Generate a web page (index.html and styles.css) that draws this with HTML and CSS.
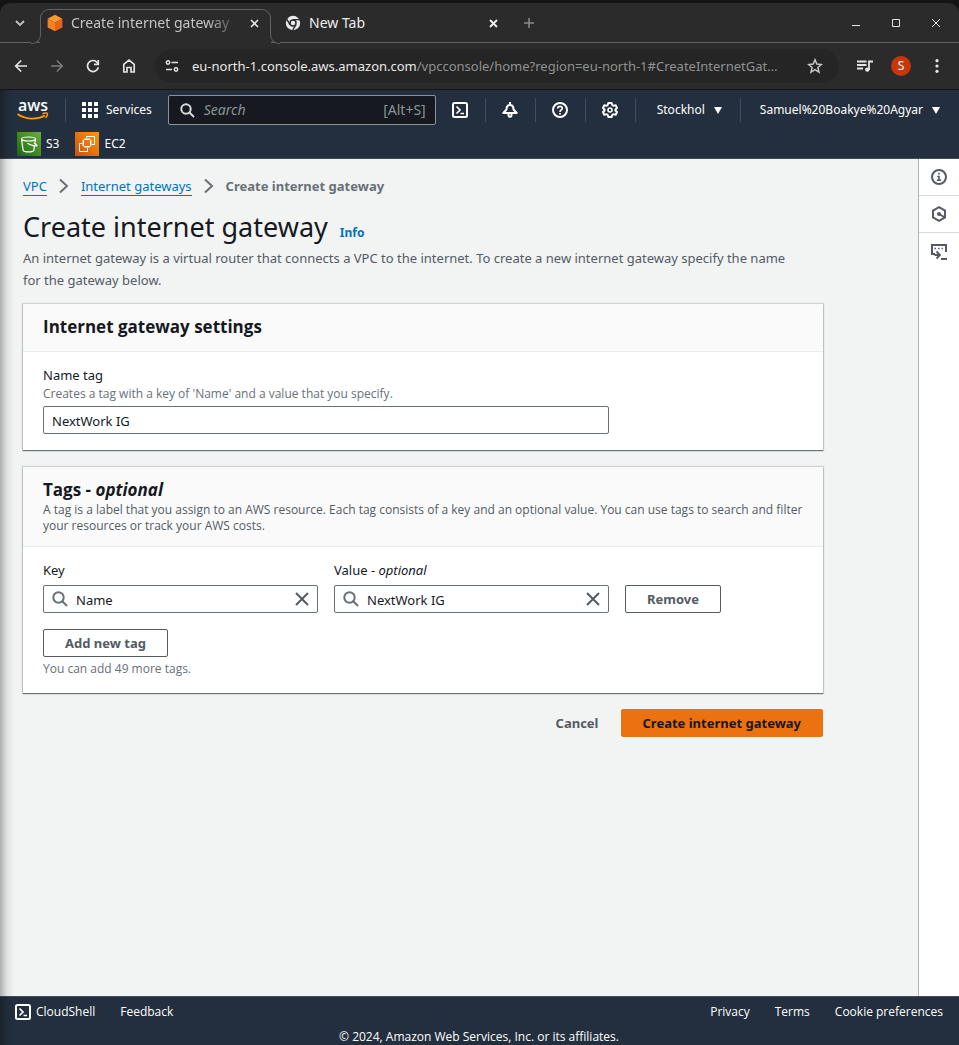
FILE: index.html
```html
<!DOCTYPE html>
<html lang="en">
<head>
<meta charset="utf-8">
<meta name="viewport" content="width=device-width, initial-scale=1">
<title>Create internet gateway</title>
<link rel="stylesheet" href="styles.css">
</head>
<body>
<div class="browser">
  <div class="tabstrip">
    <button class="tab-list" aria-label="Search tabs"><svg width="10" height="6" viewBox="0 0 10 6" fill="none" stroke="currentColor" stroke-width="1.8"><path d="M1 1l4 4 4-4"/></svg></button>
    <div class="tab tab-current">
      <svg width="16" height="18" viewBox="0 0 16 18"><path fill="#fb9a2c" d="M8 .8l7.400 4L8 8.800.6 4.800z"/><path fill="#f58220" d="M.6 4.800L8 8.800v8.400L.6 13.400z"/><path fill="#e8601c" d="M15.400 4.800L8 8.800v8.400l7.400-3.800z"/></svg>
      <span class="tab-title fade">Create internet gateway</span>
      <button class="tab-close" aria-label="Close tab"><svg width="9" height="9" viewBox="0 0 9 9" stroke="currentColor" stroke-width="1.600"><path d="M1 1l7 7M8 1L1 8"/></svg></button>
    </div>
    <div class="tab">
      <svg width="16" height="16" viewBox="0 0 16 16"><circle cx="8" cy="8" r="7.200" fill="#e8eaed"/><circle cx="8" cy="8" r="3" fill="none" stroke="#2b2b2b" stroke-width="1.500"/><path d="M8 4.600h7M5.100 9.800L1.600 3.900M10.900 9.700L7.500 15.500" stroke="#2b2b2b" stroke-width="1.400"/></svg>
      <span class="tab-title bright">New Tab</span>
      <button class="tab-close bright" aria-label="Close tab"><svg width="9" height="9" viewBox="0 0 9 9" stroke="currentColor" stroke-width="1.900"><path d="M1 1l7 7M8 1L1 8"/></svg></button>
    </div>
    <button class="new-tab" aria-label="New tab"><svg width="10" height="10" viewBox="0 0 10 10" stroke="currentColor" stroke-width="1.500"><path d="M5 0v10M0 5h10"/></svg></button>
    <div class="window-controls">
      <button aria-label="Minimize"><svg width="10" height="10" viewBox="0 0 10 10" stroke="currentColor"><path d="M1 7.500h8"/></svg></button>
      <button aria-label="Maximize"><svg width="10" height="10" viewBox="0 0 10 10" stroke="currentColor" fill="none"><path d="M1.500 1.500h7v7h-7z"/></svg></button>
      <button aria-label="Close"><svg width="10" height="10" viewBox="0 0 10 10" stroke="currentColor"><path d="M1 1l8 8M9 1L1 9"/></svg></button>
    </div>
  </div>
  <div class="toolbar">
    <div class="nav-buttons">
      <button aria-label="Back"><svg width="14" height="14" viewBox="0 0 14 14" fill="none" stroke="currentColor" stroke-width="1.700"><path d="M13 7H2M7.200 1.500L1.700 7l5.500 5.500"/></svg></button>
      <button class="dim" aria-label="Forward"><svg width="14" height="14" viewBox="0 0 14 14" fill="none" stroke="currentColor" stroke-width="1.500"><path d="M1 7h11M6.800 1.500L12.300 7l-5.500 5.500"/></svg></button>
      <button aria-label="Reload"><svg width="14" height="14" viewBox="0 0 14 14" fill="none" stroke="currentColor" stroke-width="1.700"><path d="M12.400 8.300A5.500 5.500 0 1 1 11.300 3.500L12 4.400"/><path d="M12.300 1v4.300H8"/></svg></button>
      <button aria-label="Home"><svg width="14" height="16" viewBox="0 0 14 16" fill="none" stroke="currentColor" stroke-width="1.700"><path d="M1.800 14V6.300L7 2.200l5.200 4.100V14H9V9.500H5V14z"/></svg></button>
    </div>
    <div class="address">
      <svg width="14" height="14" viewBox="0 0 14 14" fill="none" stroke="#e3e3e3" stroke-width="1.500"><circle cx="3" cy="3.500" r="1.700"/><path d="M6.500 3.500H13M1 10.500h6"/><circle cx="11" cy="10.500" r="1.700"/></svg>
      <span class="url"><b>eu-north-1.console.aws.amazon.com</b>/vpcconsole/home?region=eu-north-1#CreateInternetGat…</span>
      <button aria-label="Bookmark"><svg width="16" height="16" viewBox="0 0 16 16" fill="none" stroke="#c8c8c8" stroke-width="1.500"><path d="M8 1.800l1.800 4.300 4.600.4-3.500 3 1.100 4.600L8 11.700l-4 2.400 1.100-4.600-3.500-3 4.600-.4z"/></svg></button>
    </div>
    <button class="media" aria-label="Media"><svg width="16" height="14" viewBox="0 0 16 14" fill="none" stroke="#e3e3e3" stroke-width="1.800"><path d="M0 2.500h9.500M0 6h9.500M0 9.500h6M12 11V2.500h4"/><circle cx="10.300" cy="10.600" r="2.200" fill="#e3e3e3" stroke="none"/></svg></button>
    <button class="avatar" aria-label="Profile">S</button>
    <button class="more" aria-label="More"><svg width="4" height="14" viewBox="0 0 4 14" fill="#e8e8e8"><circle cx="2" cy="1.700" r="1.600"/><circle cx="2" cy="7" r="1.600"/><circle cx="2" cy="12.300" r="1.600"/></svg></button>
  </div>
</div>

<div class="console">
<header class="aws-nav">
  <div class="nav-row">
    <a class="logo" href="#" aria-label="AWS home"><svg width="32" height="24" viewBox="0 0 32 24"><text x="1" y="13" font-size="16" fill="#fff" class="logo-text">aws</text><path d="M0.500 16C8 21.700 20 22 28 17.500" fill="none" stroke="#f90" stroke-width="1.900"/><path d="M25.500 15.700c2-.9 4.500-.9 4.900-.3s-.3 3-1.800 4.600" fill="none" stroke="#f90" stroke-width="1.500"/></svg></a>
    <i class="rule"></i>
    <button class="services"><svg width="16" height="16" viewBox="0 0 16 16" fill="#fff"><path d="M0 0h4v4H0zM6 0h4v4H6zM12 0h4v4h-4zM0 6h4v4H0zM6 6h4v4H6zM12 6h4v4h-4zM0 12h4v4H0zM6 12h4v4H6zM12 12h4v4h-4z"/></svg>Services</button>
    <label class="nav-search">
      <svg width="15" height="15" viewBox="0 0 15 15" fill="none" stroke="#d5dbdb" stroke-width="2"><circle cx="6" cy="6" r="4.700"/><path d="M9.500 9.500L14 14"/></svg>
      <input type="text" placeholder="Search" aria-label="Search">
      <span>[Alt+S]</span>
    </label>
    <div class="nav-icons">
      <button aria-label="CloudShell"><svg width="16" height="16" viewBox="0 0 16 16" fill="none" stroke="#fff" stroke-width="2"><rect x="1" y="1" width="14" height="14" rx="1.500"/><path d="M4.500 4.500L8 8l-3.500 3.500M8.500 11.500H12" stroke-width="1.700"/></svg></button>
      <button aria-label="Notifications"><svg width="16" height="16" viewBox="0 0 16 16" fill="none" stroke="#fff" stroke-width="2" stroke-linejoin="round"><path d="M8 0v2.500M1.300 11h13.400L11.500 7.500C11.500 4.500 10 3 8 3S4.500 4.500 4.500 7.500zM6.500 11.500v2c0 1.800 3 1.800 3 0v-2"/></svg></button>
      <button aria-label="Help"><svg width="16" height="16" viewBox="0 0 16 16" fill="none" stroke="#fff" stroke-width="2"><circle cx="8" cy="8" r="7"/><path d="M5.700 6.600C5.700 3.400 10.400 3.700 10.300 6.300 10.200 8 8 7.800 8 10M8 11v1.600" stroke-width="1.700"/></svg></button>
      <button aria-label="Settings"><svg width="16" height="16" viewBox="0 0 16 16" fill="none" stroke="#fff" stroke-width="1.900" stroke-linejoin="round"><path d="M6.300 1h3.400l.6 2.100 1.200.7 2.200-.6L15 6l-1.600 1.500v1L15 10l-1.300 2.800-2.200-.6-1.200.7L9.700 15H6.300l-.6-2.100-1.200-.7-2.200.6L1 10l1.600-1.500v-1L1 6l1.300-2.800 2.200.6 1.200-.7z"/><circle cx="8" cy="8" r="2" stroke-width="1.600"/></svg></button>
    </div>
    <button class="region">Stockhol <svg width="8" height="7" viewBox="0 0 8 7" fill="#fff"><path d="M0 0h8L4 7z"/></svg></button>
    <i class="rule last"></i>
    <button class="account">Samuel%20Boakye%20Agyar <svg width="8" height="7" viewBox="0 0 8 7" fill="#fff"><path d="M0 0h8L4 7z"/></svg></button>
  </div>
  <nav class="favorites">
    <a href="#"><svg width="24" height="24" viewBox="0 0 24 24"><defs><linearGradient id="s3" x1="0" y1="1" x2="1" y2="0"><stop stop-color="#1b660f"/><stop offset="1" stop-color="#6cae3e"/></linearGradient></defs><path fill="url(#s3)" d="M0 0h24v24H0z"/><g fill="none" stroke="#fff" stroke-width="1.200"><ellipse cx="11.500" cy="7" rx="7" ry="2"/><path d="M4.500 7l1.700 11.500c1 1.900 9.600 1.900 10.600 0L18.500 7M10.500 11.300c2.500 1.700 9.500 3.600 9.500 2.200 0-.8-1.800-1.800-3-2.400"/></g></svg>S3</a>
    <a href="#"><svg width="24" height="24" viewBox="0 0 24 24"><defs><linearGradient id="ec" x1="0" y1="1" x2="1" y2="0"><stop stop-color="#c8511b"/><stop offset="1" stop-color="#f90"/></linearGradient></defs><path fill="url(#ec)" d="M0 0h24v24H0z"/><g fill="none" stroke="#fff"><rect x="8.500" y="7.500" width="7" height="7" rx="1"/><path d="M10 6v1.500M12 6v1.500M14 6v1.500M10 14.500V16M12 14.500V16M14 14.500V16M7 9h1.500M7 11h1.500M7 13h1.500M15.500 9H17M15.500 11H17M15.500 13H17" stroke-width=".9"/><path d="M11.500 6V4.500h8v8H17M7 11.500H4.500v8h8V16"/></g></svg>EC2</a>
  </nav>
</header>

<div class="workspace">
  <main>
    <nav class="breadcrumbs" aria-label="Breadcrumb">
      <a href="#">VPC</a>
      <svg width="10" height="16" viewBox="0 0 10 16" fill="none" stroke="#687078" stroke-width="2"><path d="M1 1.500L8 8l-7 6.500"/></svg>
      <a href="#">Internet gateways</a>
      <svg width="10" height="16" viewBox="0 0 10 16" fill="none" stroke="#687078" stroke-width="2"><path d="M1 1.500L8 8l-7 6.500"/></svg>
      <b>Create internet gateway</b>
    </nav>
    <div class="title-row"><h1>Create internet gateway</h1><a href="#">Info</a></div>
    <p class="intro">An internet gateway is a virtual router that connects a VPC to the internet. To create a new internet gateway specify the name for the gateway below.</p>

    <section class="card">
      <div class="card-head"><h2>Internet gateway settings</h2></div>
      <div class="card-body">
        <div class="grid">
          <div class="field wide">
            <label for="name">Name tag</label>
            <p class="hint">Creates a tag with a key of 'Name' and a value that you specify.</p>
            <input id="name" class="box" type="text" value="NextWork IG">
          </div>
        </div>
      </div>
    </section>

    <section class="card">
      <div class="card-head">
        <h2>Tags - <em>optional</em></h2>
        <p>A tag is a label that you assign to an AWS resource. Each tag consists of a key and an optional value. You can use tags to search and filter your resources or track your AWS costs.</p>
      </div>
      <div class="card-body">
        <div class="grid tags">
          <div class="field">
            <label for="key">Key</label>
            <div class="box search-box">
              <svg width="16" height="16" viewBox="0 0 16 16" fill="none" stroke="#687078" stroke-width="2"><circle cx="6.500" cy="6.500" r="5.200"/><path d="M10.300 10.300L15 15"/></svg>
              <input id="key" type="text" value="Name">
              <button aria-label="Clear key"><svg width="14" height="14" viewBox="0 0 14 14" stroke="#545b64" stroke-width="2"><path d="M1 1l12 12M13 1L1 13"/></svg></button>
            </div>
          </div>
          <div class="field">
            <label for="value">Value - <em>optional</em></label>
            <div class="box search-box">
              <svg width="16" height="16" viewBox="0 0 16 16" fill="none" stroke="#687078" stroke-width="2"><circle cx="6.500" cy="6.500" r="5.200"/><path d="M10.300 10.300L15 15"/></svg>
              <input id="value" type="text" value="NextWork IG">
              <button aria-label="Clear value"><svg width="14" height="14" viewBox="0 0 14 14" stroke="#545b64" stroke-width="2"><path d="M1 1l12 12M13 1L1 13"/></svg></button>
            </div>
          </div>
          <button class="btn">Remove</button>
        </div>
        <button class="btn add">Add new tag</button>
        <p class="hint">You can add 49 more tags.</p>
      </div>
    </section>

    <div class="actions">
      <button class="btn link">Cancel</button>
      <button class="btn primary">Create internet gateway</button>
    </div>
  </main>
  <aside class="tools">
    <button aria-label="Info panel"><svg width="16" height="16" viewBox="0 0 16 16" fill="none" stroke="#545b64" stroke-width="2"><circle cx="8" cy="8" r="7"/><path d="M8 3.800v1.800M6.200 7.500H8V11M5.800 11.300h4.400" stroke-width="1.600"/></svg></button>
    <button aria-label="Diagnostics"><svg width="16" height="16" viewBox="0 0 16 16" fill="none" stroke="#545b64" stroke-width="2"><path d="M8 1.200l6 3.400v6.800l-6 3.400-6-3.400V4.600z"/><path d="M8 8l6 3.500"/><circle cx="8" cy="8" r="2" fill="#545b64" stroke="none"/></svg></button>
    <button aria-label="Command recorder"><svg width="16" height="16" viewBox="0 0 16 16" fill="none" stroke="#545b64" stroke-width="2"><path d="M4 10H1V1h14v7"/><path d="M3.500 4.500H5M7 4.500h1.500M10.500 4.500H12" stroke-width="1.500"/><path d="M3.500 11H8M5.500 7.500L9 11l-3.500 3.500M10 15h6" stroke-width="1.800"/></svg></button>
  </aside>
</div>

<footer>
  <div class="foot-row">
    <a href="#"><svg width="16" height="16" viewBox="0 0 16 16" fill="none" stroke="#fff" stroke-width="2"><rect x="1" y="1" width="14" height="14" rx="1.500"/><path d="M4.500 4.500L8 8l-3.500 3.500M8.500 11.500H12" stroke-width="1.700"/></svg>CloudShell</a>
    <a href="#">Feedback</a>
    <a class="push" href="#">Privacy</a>
    <a href="#">Terms</a>
    <a href="#">Cookie preferences</a>
  </div>
  <p>© 2024, Amazon Web Services, Inc. or its affiliates.</p>
</footer>
</div>
</body>
</html>
```
FILE: styles.css
```css
* { box-sizing: border-box; }

body {
  margin: 0;
  min-height: 100vh;
  display: flex;
  flex-direction: column;
  background: #141414;
  color: #16191f;
  font: 13px/22px "Noto Sans", sans-serif;
}

h1, h2, p { margin: 0; }
button, input { font: inherit; color: inherit; }
button { display: inline-flex; align-items: center; justify-content: center; padding: 0; border: 0; background: none; }
input { min-width: 0; border: 0; outline: 0; background: none; }
svg { display: block; flex: none; }
a { text-decoration: none; }

/* Browser frame */
.browser { margin-top: 3px; border-radius: 10px 10px 0 0; background: #2b2b2b; color: #e3e3e3; }
.tabstrip { display: flex; height: 40px; padding: 6px 3px 0 0; border-bottom: 1px solid #626262; }
.tab-list { width: 40px; height: 28px; color: #c4c4c4; flex: none; }
.tab { position: relative; display: flex; align-items: center; width: 242px; height: 28px; padding: 0 14px; gap: 8px; font-size: 14px; }
.tab-current { width: 231px; height: 25px; padding: 2px 10px 0 6px; border: 1px solid #626262; border-bottom: 0; border-radius: 9px 9px 0 0; background: #2b2b2b; box-shadow: 0 9px 0 #2b2b2b; }
.tab-current::before, .tab-current::after { content: ""; position: absolute; top: 100%; width: 9px; height: 9px; border-bottom: 1px solid #626262; background: #2b2b2b; }
.tab-current::before { right: 100%; border-right: 1px solid #626262; border-bottom-right-radius: 9px; }
.tab-current::after { left: 100%; border-left: 1px solid #626262; border-bottom-left-radius: 9px; }
.tab-title { flex: 1; overflow: hidden; white-space: nowrap; color: #c4c4c4; }
.tab-title.fade { mask-image: linear-gradient(to right, #000 80%, transparent); }
.bright { color: #eee; }
.tab-close { width: 11px; flex: none; }
.new-tab { width: 32px; height: 28px; color: #8a8a8a; }
.window-controls { display: flex; margin-left: auto; height: 28px; }
.window-controls button { width: 40px; }

.toolbar { display: flex; align-items: center; height: 46px; padding: 0 12px 0 3px; }
.nav-buttons { display: flex; }
.nav-buttons button { width: 36px; height: 32px; }
.dim { color: #7e7e7e; }
.address { display: flex; align-items: center; flex: 1; min-width: 0; height: 34px; margin-left: 8px; padding: 0 16px 0 10px; gap: 13px; border-radius: 17px; background: #252525; }
.url { flex: 1; overflow: hidden; white-space: nowrap; text-overflow: ellipsis; font-size: 13px; color: #919191; }
.url b { font-weight: 400; color: #e8e8e8; }
.media { width: 16px; margin-left: 18px; }
.avatar { width: 20px; height: 20px; margin-left: 18px; border-radius: 50%; background: #c8370a; color: #fff; font-size: 12px; }
.more { width: 20px; margin-left: 16px; }

/* Console */
.console { position: relative; flex: 1; display: flex; flex-direction: column; background: #f2f3f3; margin-top: 1px; }
.console::before { content: ""; position: absolute; z-index: 2; inset: 0 auto 0 0; width: 14px; background: linear-gradient(to right, rgba(0,0,0,.28), rgba(0,0,0,.08) 50%, transparent); pointer-events: none; }

.aws-nav { height: 69px; background: #232f3e; color: #fff; font-size: 12px; line-height: 16px; border-bottom: 1px solid #414d5c; }
.nav-row { display: flex; align-items: center; height: 40px; padding: 0 19px 0 17px; }
.logo-text { font-family: "Open Sans", sans-serif; font-weight: 600; }
.rule { width: 1px; height: 24px; margin: 0 16px; background: #414d5c; }
.services { gap: 8px; }
.nav-search { display: flex; align-items: center; flex: 1; min-width: 0; height: 30px; margin-left: 16px; padding: 0 9px 0 11px; gap: 9px; border: 1px solid #879596; border-radius: 2px; background: #16191f; font-size: 14px; color: #879596; }
.nav-search input { flex: 1; width: 0; padding: 0; }
.nav-search input::placeholder { color: #879596; font-style: italic; opacity: 1; }
.nav-icons { display: flex; }
.nav-icons button { width: 50px; height: 24px; border-right: 1px solid #414d5c; }
.region, .account { gap: 9px; }
.region { margin-left: 21px; }
.rule.last { margin: 0 19px 0 18px; }
.favorites { display: flex; gap: 16px; padding: 2px 17px; }
.favorites a { display: flex; align-items: center; gap: 5px; color: #fff; }

.workspace { flex: 1; display: flex; }
main { flex: 1; padding: 16px 23px; }
main > * { max-width: 800px; }
.breadcrumbs { display: flex; align-items: center; gap: 12px; color: #687078; }
.breadcrumbs a { color: #0073bb; line-height: 18px; border-bottom: 1px solid #0073bb; }
.title-row { display: flex; align-items: baseline; gap: 12px; margin-top: 12px; }
h1 { font-size: 27px; line-height: 36px; font-weight: 400; }
.title-row a { font-size: 12px; font-weight: 700; color: #0073bb; }
.intro { margin-top: 2px; padding-right: 20px; color: #545b64; }

.card { margin-top: 13px; background: #fff; box-shadow: 0 1px 1px rgba(0,28,36,.5), 0 0 1px 1px rgba(0,28,36,.15); }
.card + .card { margin-top: 17px; }
.card-head { padding: 11px 20px 12px; border-bottom: 1px solid #eaeded; background: #fafafa; }
.card-head p, .hint { font: 12px/16px "Open Sans", sans-serif; }
.card-head p { color: #545b64; }
h2 { font: 700 17px/24px "Open Sans", sans-serif; }
.card-body { padding: 12px 20px 16px; }
.grid { display: grid; grid-template-columns: 1fr 1fr 178px; gap: 16px; align-items: end; justify-items: start; }
.field { display: flex; flex-direction: column; width: 100%; }
.wide { grid-column: span 2; }
.hint { color: #687078; }
.box { width: 100%; height: 28px; padding: 2px 8px 0; border: 1px solid #687078; border-radius: 2px; background: #fff; }
.wide .hint { margin-bottom: 4px; }
.search-box { display: flex; align-items: center; gap: 8px; padding-top: 0; }
.tags .box { margin-top: 4px; }
.search-box input { flex: 1; padding: 2px 0 0; }
.btn { height: 28px; padding: 0 21px; border: 1px solid #545b64; border-radius: 2px; background: #fff; color: #545b64; font-weight: 700; }
.btn.add { margin: 16px 0 4px; }
.actions { display: flex; justify-content: flex-end; margin-top: 16px; }
.btn.link { border-color: transparent; background: none; }
.btn.primary { border-color: #ec7211; background: #ec7211; color: #16191f; }

.tools { width: 41px; background: #fff; border-left: 1px solid #aab7b8; }
.tools button { width: 100%; height: 37px; border-bottom: 1px solid #d5dbdb; }
.tools button:last-child { border-bottom: 0; }

footer { padding: 7px 16px 0 15px; height: 49px; border-top: 1px solid #414d5c; background: #232f3e; color: #fff; font: 12px/16px "Open Sans", sans-serif; }
.foot-row { display: flex; gap: 25px; }
footer a { display: flex; gap: 5px; color: #fff; }
.push { margin-left: auto; }
footer p { margin-top: 9px; text-align: center; }
```
